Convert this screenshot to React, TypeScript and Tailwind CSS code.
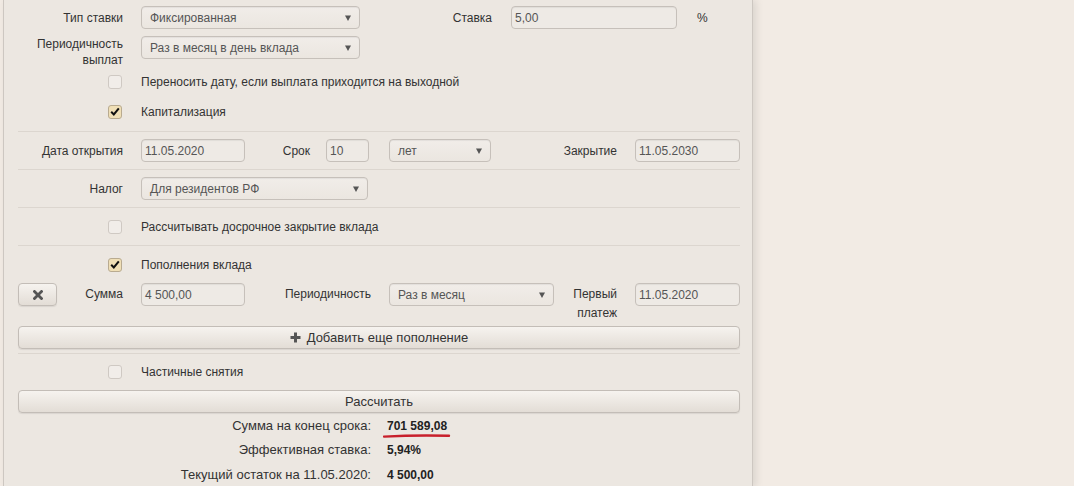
import React from 'react'

const inputCls =
  'h-[23px] flex items-center rounded-[4px] border border-[#c6c0ba] bg-[#eeeae5] px-[3px] text-[#555] shadow-[inset_0_1px_1px_rgba(0,0,0,0.06)]'

function Select({ value, w }: { value: string; w: string }) {
  return (
    <div className={`${w} ${inputCls} justify-between !pl-[8px] !pr-[8px] bg-gradient-to-b from-[#f1ede9] to-[#ebe6e0]`}>
      <span>{value}</span>
      <svg width="6" height="6" viewBox="0 0 6 6">
        <path d="M0 0.5h6L3 6z" fill="#555" />
      </svg>
    </div>
  )
}

function Input({ value, w }: { value: string; w: string }) {
  return <div className={`${w} ${inputCls}`}>{value}</div>
}

function Check({ checked, label, h }: { checked?: boolean; label: string; h: string }) {
  return (
    <div className={`flex items-center ${h}`}>
      <div className="w-[105px] flex justify-end pr-[1px]">
        {checked ? (
          <div className="w-[14px] h-[14px] rounded-[3px] border border-[#b9ab90] bg-[#f0dfb6] flex items-center justify-center">
            <svg width="10" height="9" viewBox="0 0 10 9">
              <path d="M1.2 4.8 3.8 7.4 8.8 1.4" fill="none" stroke="#111" strokeWidth="2" />
            </svg>
          </div>
        ) : (
          <div className="w-[14px] h-[14px] rounded-[3px] border border-[#cfc9c3] bg-[#f1ede9]" />
        )}
      </div>
      <span className="ml-[18px]">{label}</span>
    </div>
  )
}

const btnCls =
  'h-[23px] flex items-center justify-center rounded-[4px] border border-[#c3bdb7] bg-gradient-to-b from-[#f6f3ef] to-[#e3ddd6] shadow-[0_1px_1px_rgba(0,0,0,0.08)] text-[#333] text-[13px]'

export default function App() {
  return (
    <div className="min-h-[486px] bg-[#f2ebe4] flex font-['Liberation_Sans',Arial,sans-serif] text-[12px] leading-[16px] text-[#333]">
      <div className="ml-[3px] w-[750px] min-h-[486px] border-l border-r border-[#cdc7c1] bg-[#ece7e1] pl-[14px] pr-[12px] shadow-[3px_0_8px_rgba(0,0,0,0.10)]">
        {/* top */}
        <div className="pt-[6px] pb-[4px] border-b border-[#dcd6cf]">
          <div className="flex items-center h-[23px]">
            <div className="w-[105px] text-right">Тип ставки</div>
            <div className="ml-[18px]">
              <Select value="Фиксированная" w="w-[219px]" />
            </div>
            <div className="w-[132px] text-right">Ставка</div>
            <div className="ml-[19px]">
              <Input value="5,00" w="w-[166px]" />
            </div>
            <span className="ml-[20px]">%</span>
          </div>
          <div className="flex items-start mt-[7px] h-[32px]">
            <div className="w-[105px] text-right">Периодичность выплат</div>
            <div className="ml-[18px]">
              <Select value="Раз в месяц в день вклада" w="w-[219px]" />
            </div>
          </div>
          <Check label="Переносить дату, если выплата приходится на выходной" h="h-[28px]" />
          <Check checked label="Капитализация" h="h-[31px]" />
        </div>

        {/* dates */}
        <div className="flex items-center h-[37px] border-b border-[#dcd6cf] box-content">
          <div className="w-[105px] text-right">Дата открытия</div>
          <div className="ml-[18px]">
            <Input value="11.05.2020" w="w-[104px]" />
          </div>
          <div className="w-[65px] text-right">Срок</div>
          <div className="ml-[16px]">
            <Input value="10" w="w-[43px]" />
          </div>
          <div className="ml-[20px]">
            <Select value="лет" w="w-[102px]" />
          </div>
          <div className="w-[126px] text-right">Закрытие</div>
          <div className="ml-[18px]">
            <Input value="11.05.2030" w="w-[105px]" />
          </div>
        </div>

        {/* tax */}
        <div className="flex items-center h-[37px] border-b border-[#dcd6cf] box-content">
          <div className="w-[105px] text-right">Налог</div>
          <div className="ml-[18px]">
            <Select value="Для резидентов РФ" w="w-[227px]" />
          </div>
        </div>

        <div className="border-b border-[#dcd6cf]">
          <Check label="Рассчитывать досрочное закрытие вклада" h="h-[37px]" />
        </div>

        {/* deposits */}
        <div className="pb-[4px] border-b border-[#dcd6cf]">
          <Check checked label="Пополнения вклада" h="h-[37px]" />
          <div className="flex items-start h-[40px]">
            <button className={`${btnCls} w-[39px] h-[22px]`}>
              <svg width="10" height="10" viewBox="0 0 10 10">
                <path d="M1.5 1.5l7 7M8.5 1.5l-7 7" stroke="#555" strokeWidth="2.8" strokeLinecap="square" />
              </svg>
            </button>
            <div className="w-[66px] text-right leading-[23px]">Сумма</div>
            <div className="ml-[18px]">
              <Input value="4 500,00" w="w-[104px]" />
            </div>
            <div className="w-[126px] text-right leading-[23px]">Периодичность</div>
            <div className="ml-[18px]">
              <Select value="Раз в месяц" w="w-[165px]" />
            </div>
            <div className="w-[63px] text-right leading-[19px] pt-[2px]">
              Первый
              <br />
              платеж
            </div>
            <div className="ml-[18px]">
              <Input value="11.05.2020" w="w-[105px]" />
            </div>
          </div>
          <button className={`${btnCls} w-full mt-[3px] gap-[6px]`}>
            <svg width="11" height="11" viewBox="0 0 11 11">
              <path d="M5.5 0.5v10M0.5 5.5h10" stroke="#555" strokeWidth="3" />
            </svg>
            <span>Добавить еще пополнение</span>
          </button>
        </div>

        <Check label="Частичные снятия" h="h-[36px]" />
        <button className={`${btnCls} w-full`}>Рассчитать</button>

        {/* results */}
        <div className="flex items-center h-[25px]">
          <div className="w-[353px] text-right text-[13px]">Сумма на конец срока:</div>
          <div className="ml-[16px] relative font-bold text-[#222]">
            701 589,08
            <svg className="absolute left-[-4px] top-[15px]" width="68" height="6" viewBox="0 0 68 6">
              <path d="M1 3.6C20 2.6 45 2.2 66 2.8" fill="none" stroke="#c8202c" strokeWidth="2.4" strokeLinecap="round" />
            </svg>
          </div>
        </div>
        <div className="flex items-center h-[24px]">
          <div className="w-[353px] text-right text-[13px]">Эффективная ставка:</div>
          <div className="ml-[16px] font-bold text-[#222]">5,94%</div>
        </div>
        <div className="flex items-center h-[25px]">
          <div className="w-[353px] text-right text-[13px]">Текущий остаток на 11.05.2020:</div>
          <div className="ml-[16px] font-bold text-[#222]">4 500,00</div>
        </div>
      </div>
    </div>
  )
}
